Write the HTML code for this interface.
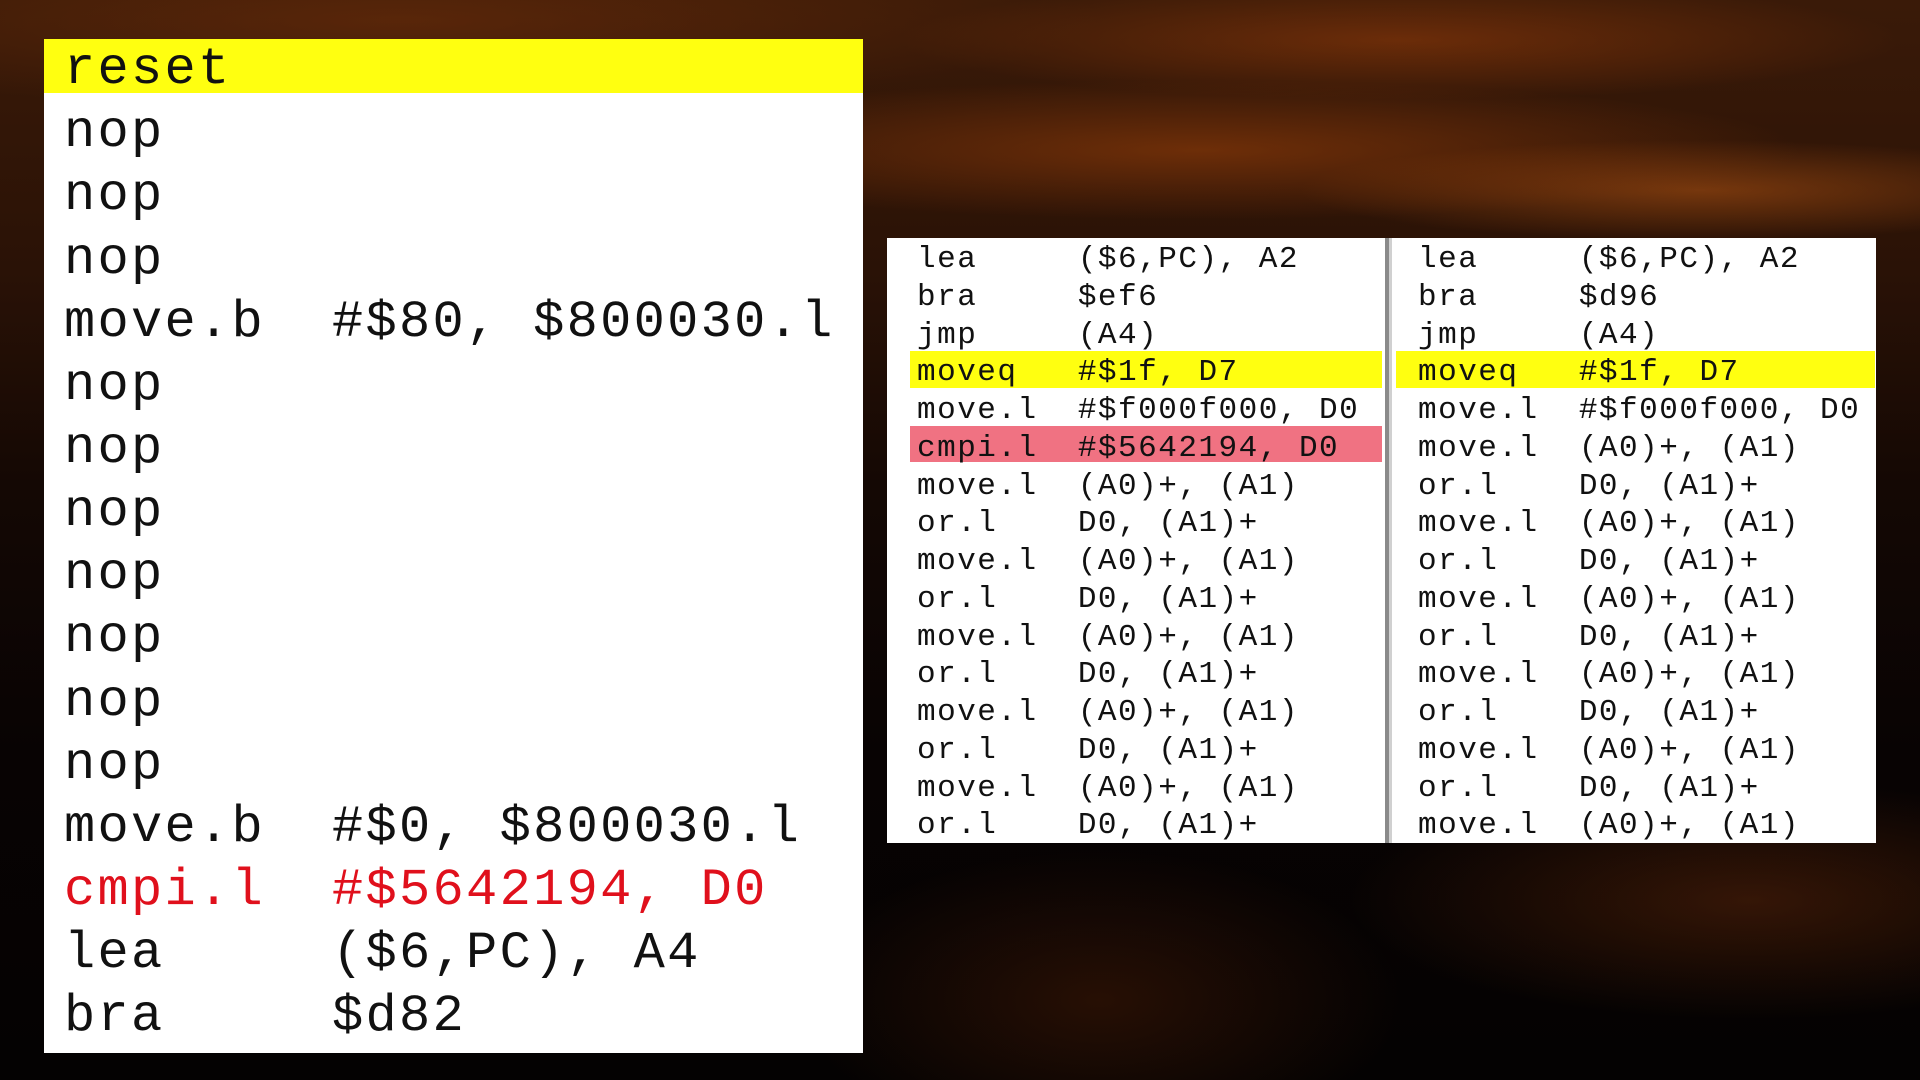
<!DOCTYPE html>
<html><head><meta charset="utf-8"><style>
html,body{margin:0;padding:0;width:1920px;height:1080px;overflow:hidden;background:#050202;}
#bg{position:absolute;left:0;top:0;width:1920px;height:1080px;
background:
radial-gradient(ellipse 500px 60px at 1400px 40px, rgba(150,60,10,.55), transparent),
radial-gradient(ellipse 600px 70px at 1200px 150px, rgba(170,70,10,.5), transparent),
radial-gradient(ellipse 400px 50px at 1700px 190px, rgba(190,90,20,.5), transparent),
radial-gradient(ellipse 700px 90px at 400px 20px, rgba(120,50,10,.5), transparent),
radial-gradient(ellipse 400px 120px at 1750px 900px, rgba(110,45,10,.45), transparent),
radial-gradient(ellipse 300px 150px at 1100px 1000px, rgba(90,35,8,.4), transparent),
linear-gradient(180deg,#3a1a08 0%,#2a1206 25%,#140804 45%,#080303 70%,#040202 100%);}
.panel{position:absolute;background:#fff;}
.row{position:absolute;white-space:pre;font-family:"Liberation Mono",monospace;color:#111;}
.L .row{font-size:52px;letter-spacing:2.3px;line-height:63px;left:64px;margin-top:4px;}
.S .row{font-size:31px;letter-spacing:1.5px;line-height:38px;margin-top:3px;}
.hl{position:absolute;}
</style></head><body>
<div id="bg"></div>
<div class="panel" style="left:44px;top:39px;width:819px;height:1014px;"></div>
<div class="hl" style="left:44px;top:39px;width:819px;height:54px;background:#ffff10;"></div>
<div class="L">
<div class="row" style="top:34px">reset</div>
<div class="row" style="top:97px">nop</div>
<div class="row" style="top:160px">nop</div>
<div class="row" style="top:224px">nop</div>
<div class="row" style="top:287px">move.b  #$80, $800030.l</div>
<div class="row" style="top:350px">nop</div>
<div class="row" style="top:413px">nop</div>
<div class="row" style="top:476px">nop</div>
<div class="row" style="top:539px">nop</div>
<div class="row" style="top:602px">nop</div>
<div class="row" style="top:666px">nop</div>
<div class="row" style="top:729px">nop</div>
<div class="row" style="top:792px">move.b  #$0, $800030.l</div>
<div class="row" style="top:855px;color:#e0101c">cmpi.l  #$5642194, D0</div>
<div class="row" style="top:918px">lea     ($6,PC), A4</div>
<div class="row" style="top:981px">bra     $d82</div>
</div>

<div class="panel" style="left:887px;top:238px;width:989px;height:605px;"></div>
<div style="position:absolute;left:1385px;top:238px;width:4px;height:605px;background:#8a8a8a"></div>
<div style="position:absolute;left:1389px;top:238px;width:3px;height:605px;background:#d0d0d0"></div>
<div class="hl" style="left:910px;top:351px;width:472px;height:37px;background:#ffff10"></div>
<div class="hl" style="left:1396px;top:351px;width:479px;height:37px;background:#ffff10"></div>
<div class="hl" style="left:910px;top:426px;width:472px;height:36px;background:#f07282"></div>
<div class="S">
<div class="row" style="left:917px;top:238px">lea     ($6,PC), A2</div>
<div class="row" style="left:917px;top:276px">bra     $ef6</div>
<div class="row" style="left:917px;top:314px">jmp     (A4)</div>
<div class="row" style="left:917px;top:351px">moveq   #$1f, D7</div>
<div class="row" style="left:917px;top:389px">move.l  #$f000f000, D0</div>
<div class="row" style="left:917px;top:427px">cmpi.l  #$5642194, D0</div>
<div class="row" style="left:917px;top:465px">move.l  (A0)+, (A1)</div>
<div class="row" style="left:917px;top:502px">or.l    D0, (A1)+</div>
<div class="row" style="left:917px;top:540px">move.l  (A0)+, (A1)</div>
<div class="row" style="left:917px;top:578px">or.l    D0, (A1)+</div>
<div class="row" style="left:917px;top:616px">move.l  (A0)+, (A1)</div>
<div class="row" style="left:917px;top:653px">or.l    D0, (A1)+</div>
<div class="row" style="left:917px;top:691px">move.l  (A0)+, (A1)</div>
<div class="row" style="left:917px;top:729px">or.l    D0, (A1)+</div>
<div class="row" style="left:917px;top:767px">move.l  (A0)+, (A1)</div>
<div class="row" style="left:917px;top:804px">or.l    D0, (A1)+</div>

<div class="row" style="left:1418px;top:238px">lea     ($6,PC), A2</div>
<div class="row" style="left:1418px;top:276px">bra     $d96</div>
<div class="row" style="left:1418px;top:314px">jmp     (A4)</div>
<div class="row" style="left:1418px;top:351px">moveq   #$1f, D7</div>
<div class="row" style="left:1418px;top:389px">move.l  #$f000f000, D0</div>
<div class="row" style="left:1418px;top:427px">move.l  (A0)+, (A1)</div>
<div class="row" style="left:1418px;top:465px">or.l    D0, (A1)+</div>
<div class="row" style="left:1418px;top:502px">move.l  (A0)+, (A1)</div>
<div class="row" style="left:1418px;top:540px">or.l    D0, (A1)+</div>
<div class="row" style="left:1418px;top:578px">move.l  (A0)+, (A1)</div>
<div class="row" style="left:1418px;top:616px">or.l    D0, (A1)+</div>
<div class="row" style="left:1418px;top:653px">move.l  (A0)+, (A1)</div>
<div class="row" style="left:1418px;top:691px">or.l    D0, (A1)+</div>
<div class="row" style="left:1418px;top:729px">move.l  (A0)+, (A1)</div>
<div class="row" style="left:1418px;top:767px">or.l    D0, (A1)+</div>
<div class="row" style="left:1418px;top:804px">move.l  (A0)+, (A1)</div>
</div>
</body></html>
